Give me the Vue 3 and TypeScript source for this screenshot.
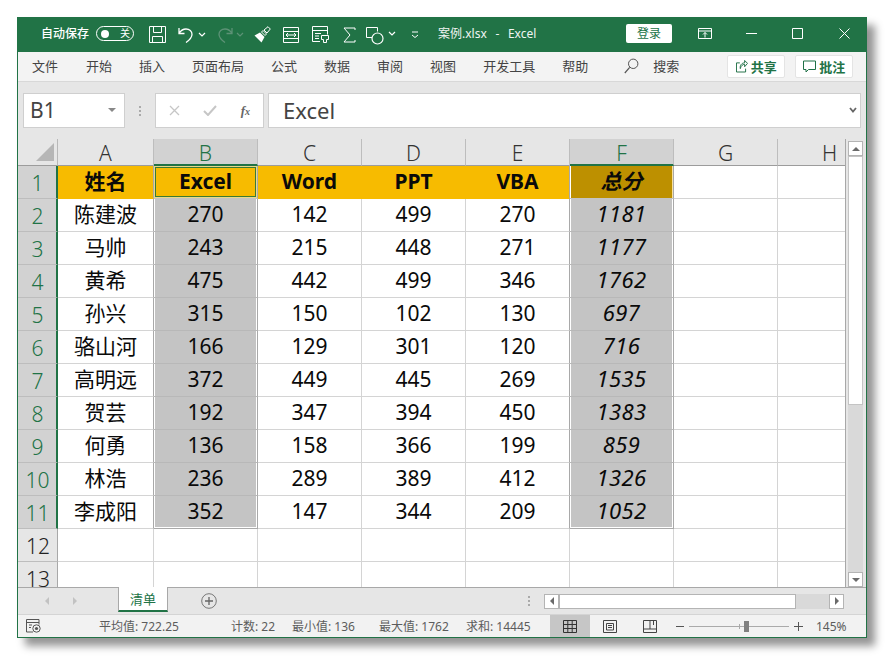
<script setup lang="ts">
const menus = ['文件', '开始', '插入', '页面布局', '公式', '数据', '审阅', '视图', '开发工具', '帮助']
const cols = ['A', 'B', 'C', 'D', 'E', 'F', 'G', 'H']
const rows: (string | number)[][] = [
  ['姓名', 'Excel', 'Word', 'PPT', 'VBA', '总分'],
  ['陈建波', 270, 142, 499, 270, 1181],
  ['马帅', 243, 215, 448, 271, 1177],
  ['黄希', 475, 442, 499, 346, 1762],
  ['孙兴', 315, 150, 102, 130, 697],
  ['骆山河', 166, 129, 301, 120, 716],
  ['高明远', 372, 449, 445, 269, 1535],
  ['贺芸', 192, 347, 394, 450, 1383],
  ['何勇', 136, 158, 366, 199, 859],
  ['林浩', 236, 289, 389, 412, 1326],
  ['李成阳', 352, 147, 344, 209, 1052],
  ['', '', '', '', '', ''],
  ['', '', '', '', '', '']
]
function cellClass(r: number, c: number): Record<string, boolean> {
  const inData = r <= 10
  return {
    head: r === 0,
    sel: inData && (c === 1 || c === 5),
    beforeSel: inData && (c === 0 || c === 4),
    active: r === 0 && c === 1,
    total: inData && c === 5,
    totalNum: inData && r > 0 && c === 5,
    headTotal: r === 0 && c === 5,
    lastSel: r === 10 && (c === 1 || c === 5)
  }
}
</script>

<template>
  <div class="page">
    <div class="window">
      <header class="titlebar">
        <span class="autosave">自动保存</span>
        <span class="toggle"><i class="knob"></i><b>关</b></span>
        <svg class="ic save" width="17" height="17" viewBox="0 0 17 17"><path d="M.5.5h16v16H.5zM4.5.5v6h8v-6M3.500 16.500v-6h10v6" fill="none" stroke="#fff"/></svg>
        <svg class="ic undo" width="16" height="16" viewBox="0 0 16 16"><path d="M1 1v5.500h5.500M1.300 6C3 3.300 5.300 2 8 2c3.500 0 6 2.400 6 5.300 0 3-2.300 5.700-6 8.200" fill="none" stroke="#fff" stroke-width="1.300"/></svg>
        <svg class="ic chev" width="8" height="5" viewBox="0 0 8 5"><path d="M1 1l3 3 3-3" fill="none" stroke="#fff" stroke-width="1.200"/></svg>
        <svg class="ic redo" width="16" height="16" viewBox="0 0 16 16"><path d="M15 1v5.500H9.500M14.700 6C13 3.300 10.700 2 8 2 4.500 2 2 4.400 2 7.300c0 3 2.300 5.700 6 8.200" fill="none" stroke="#5d9276" stroke-width="1.300"/></svg>
        <svg class="ic chev2" width="8" height="5" viewBox="0 0 8 5"><path d="M1 1l3 3 3-3" fill="none" stroke="#5d9276" stroke-width="1.200"/></svg>
        <svg class="ic brush" width="17" height="17" viewBox="0 0 17 17"><path d="M.5 9.500L6 6.500l4.500 4.500L7.500 16.500z" fill="#fff"/><path d="M7.500 6l1.500-1.500 3.500 3.500L11 9.500z" fill="none" stroke="#fff"/><path d="M10 4l4-3.300 2.300 2.300L13 7z" fill="none" stroke="#fff"/></svg>
        <svg class="ic merge" width="16" height="16" viewBox="0 0 16 16"><path d="M.5.500h15v15H.5zM.5 4.500h15M.5 11.500h15" fill="none" stroke="#fff"/><path d="M3 8h10M5 6L3 8l2 2M11 6l2 2-2 2" fill="none" stroke="#fff"/></svg>
        <svg class="ic form" width="17" height="17" viewBox="0 0 17 17"><path d="M8 15.500H.5V.5h15v8M.5 4.500h15M3 7.500h6M3 10h4M3 12.500h4" fill="none" stroke="#fff"/><path d="M9.500 9.500h7v4h-2v3h-3v-3h-2z" fill="none" stroke="#fff"/></svg>
        <svg class="ic sigma" width="13" height="16" viewBox="0 0 13 16"><path d="M12 3V1H1l6 7-6 7h11v-2" fill="none" stroke="#fff"/></svg>
        <svg class="ic shapes" width="18" height="18" viewBox="0 0 18 18"><path d="M6 10.500H.5V.5h11v4" fill="none" stroke="#fff"/><circle cx="11.500" cy="11.500" r="5.500" fill="none" stroke="#fff" stroke-width="1.200"/></svg>
        <svg class="ic chev3" width="8" height="5" viewBox="0 0 8 5"><path d="M1 1l3 3 3-3" fill="none" stroke="#fff" stroke-width="1.200"/></svg>
        <svg class="ic qat" width="8" height="7" viewBox="0 0 8 7"><path d="M1 1h6M1 4l3 2.500L7 4" fill="none" stroke="#fff"/></svg>
        <span class="doc">案例.xlsx&nbsp; - &nbsp;Excel</span>
        <span class="login">登录</span>
        <svg class="ic ribbon" width="14" height="12" viewBox="0 0 14 12"><path d="M.5.500h13v10H.5zM.5 3h13" fill="none" stroke="#fff"/><path d="M7 9.500V4.500M5 6.500l2-2 2 2" fill="none" stroke="#fff"/></svg>
        <svg class="ic min" width="11" height="1" viewBox="0 0 11 1"><path d="M0 .5h11" stroke="#fff"/></svg>
        <svg class="ic max" width="11" height="11" viewBox="0 0 11 11"><path d="M.5.500h10v10H.5z" fill="none" stroke="#fff"/></svg>
        <svg class="ic close" width="11" height="11" viewBox="0 0 11 11"><path d="M.5.500l10 10M10.500.5l-10 10" fill="none" stroke="#fff"/></svg>
      </header>

      <nav class="menubar">
        <span v-for="m in menus" :key="m" class="menu">{{ m }}</span>
        <svg class="search" width="15" height="16" viewBox="0 0 15 16"><circle cx="9.200" cy="5.800" r="4.700" fill="none" stroke="#555"/><path d="M5.700 9.300L.8 15" stroke="#555" stroke-width="1.200"/></svg>
        <span class="menu searchText">搜索</span>
        <button class="action share"><svg width="12" height="13" viewBox="0 0 12 13"><path d="M4 3H.5v9.500h9.500V9M4.500 9C5 6 7 4.500 9 4.500V7l3-3.500L9 .5v2.500C6 3 3.800 5.500 4.500 9z" fill="none" stroke="#1f7046" transform="scale(.96)"/></svg>共享</button>
        <button class="action note"><svg width="13" height="13" viewBox="0 0 13 13"><path d="M.5 1h12v8.500H5.500L3 12V9.500H.5z" fill="none" stroke="#1f7046"/></svg>批注</button>
      </nav>

      <section class="formula">
        <div class="namebox"><span>B1</span><i class="tri"></i></div>
        <span class="dots"></span>
        <div class="fxbox">
          <svg width="11" height="11" viewBox="0 0 11 11"><path d="M1 1l9 9M10 1l-9 9" stroke="#c6c6c6" stroke-width="1.300"/></svg>
          <svg width="14" height="11" viewBox="0 0 14 11"><path d="M1 6l4 4 8-9" fill="none" stroke="#c6c6c6" stroke-width="2"/></svg>
          <span class="fx">f<small>x</small></span>
        </div>
        <div class="input"><span>Excel</span><svg width="8" height="6" viewBox="0 0 8 6"><path d="M1 1l3 3.500L7 1" fill="none" stroke="#666" stroke-width="1.800"/></svg></div>
      </section>

      <section class="body">
        <div class="sheetarea">
          <div class="grid">
            <div class="corner"><i></i></div>
            <div v-for="(c, i) in cols" :key="c" class="colhead" :class="{ colsel: i === 1 || i === 5 }">{{ c }}</div>
            <template v-for="(row, r) in rows" :key="r">
              <div class="rowhead" :class="{ rowsel: r <= 10 }">{{ r + 1 }}</div>
              <div v-for="(v, c) in row" :key="c" class="cell" :class="cellClass(r, c)">{{ v }}</div>
              <div class="cell"></div>
              <div class="cell"></div>
            </template>
          </div>
        </div>
        <div class="vscroll">
          <span class="vbtn"><i class="up"></i></span>
          <span class="vthumb"></span>
          <span class="vtrack"></span>
          <span class="vbtn"><i class="down"></i></span>
        </div>
      </section>

      <section class="tabbar">
        <i class="nav left"></i>
        <i class="nav right"></i>
        <span class="tab">清单</span>
        <svg class="plus" width="16" height="16" viewBox="0 0 16 16"><circle cx="8" cy="8" r="7.300" fill="none" stroke="#777"/><path d="M4 8h8M8 4v8" stroke="#666" stroke-width="1.300"/></svg>
        <span class="dots tabdots"></span>
        <div class="hscroll">
          <span class="hbtn"><i class="left2"></i></span>
          <span class="hthumb"></span>
          <span class="htrack"></span>
          <span class="hbtn"><i class="right2"></i></span>
        </div>
      </section>

      <footer class="status">
        <svg class="macro" width="15" height="14" viewBox="0 0 15 14"><path d="M7 13H.5V.5h12.500v5M.5 3.500h12.500M3 6h3M3 8.500h2" fill="none" stroke="#555"/><circle cx="10.500" cy="9.500" r="3.700" fill="none" stroke="#555"/><circle cx="10.500" cy="9.500" r="1.600" fill="#555"/></svg>
        <span class="st st1">平均值: 722.25</span>
        <span class="st st2">计数: 22</span>
        <span class="st st3">最小值: 136</span>
        <span class="st st4">最大值: 1762</span>
        <span class="st st5">求和: 14445</span>
        <span class="view on"><svg width="14" height="13" viewBox="0 0 14 13"><path d="M.5.500h13v12H.5zM.5 4.500h13M.5 8.500h13M4.800.5v12M9.200.5v12" fill="none" stroke="#333"/></svg></span>
        <span class="view"><svg width="14" height="13" viewBox="0 0 14 13"><path d="M.5.500h13v12H.5zM3.500 3.500h7v6.500h-7zM5 5.500h4M5 7.500h4" fill="none" stroke="#444"/></svg></span>
        <span class="view"><svg width="14" height="13" viewBox="0 0 14 13"><path d="M.5.500h13v12H.5zM.5 9h13M7 .5V9M10.500.5V5" fill="none" stroke="#444"/></svg></span>
        <span class="zoomMinus"></span>
        <span class="slider"><i class="tick"></i><i class="sthumb"></i></span>
        <span class="zoomPlus"></span>
        <span class="pct">145%</span>
      </footer>
    </div>
  </div>
</template>

<style scoped>
* { box-sizing: border-box; }
.page {
  width: 885px; height: 656px; padding: 17px 0 0 17px; background: #fff;
  font-family: "Noto Sans", "Noto Sans CJK SC", sans-serif; overflow: hidden;
}
.window {
  width: 850px; height: 621px; display: flex; flex-direction: column;
  background: #e6e6e6; border: solid #217346; border-width: 0 1px 1px 1px;
  box-shadow: 8px 8px 8px rgba(0, 0, 0, .42);
}
.titlebar {
  height: 35px; flex: none; background: #217346; color: #fff; display: flex; align-items: center;
  font-size: 12px; padding-left: 23px;
}
.ic { display: block; flex: none; }
.autosave { width: 48px; font-weight: 500; white-space: nowrap; margin-top: -3px; }
.toggle {
  width: 38px; height: 15px; margin-left: 7px; border: 1px solid #fff; border-radius: 8px;
  display: flex; align-items: center; justify-content: space-between; padding: 0 3px 0 4px; flex: none; margin-top: -2px;
}
.knob { width: 8px; height: 8px; border-radius: 50%; background: #fff; }
.toggle b { font-weight: 400; font-size: 10px; line-height: 13px; }
.save { margin-left: 15px; }
.undo { margin-left: 12px; }
.chev { margin-left: 4px; }
.redo { margin-left: 11px; }
.chev2 { margin-left: 3px; }
.brush { margin-left: 10px; }
.merge { margin-left: 12px; }
.form { margin-left: 13px; }
.sigma { margin-left: 14px; }
.shapes { margin-left: 10px; margin-top: 3px; }
.chev3 { margin-left: 4px; margin-top: -3px; }
.qat { margin-left: 15px; }
.doc { margin-left: 19px; width: 188px; white-space: nowrap; color: #f0f5f2; margin-top: -3px; word-spacing: 1.2px; }
.login {
  width: 46px; height: 19px; background: #fff; color: #217346; border-radius: 2px;
  text-align: center; line-height: 19px; flex: none; margin-top: -3px;
}
.ribbon { margin-left: 26px; margin-top: -2px; }
.min { margin-left: 34px; margin-top: -2px; }
.max { margin-left: 35px; margin-top: -2px; }
.close { margin-left: 36px; margin-top: -2px; }

.menubar {
  height: 30px; flex: none; background: #f3f3f3; border-bottom: 1px solid #d8d8d8; display: flex; align-items: center;
  padding: 0 0 2px 14px; color: #444; font-size: 13px;
}
.menu { margin-right: 27px; white-space: nowrap; line-height: 18px; }
.menu:first-child { margin-right: 28px; }
.search { margin-left: 9px; flex: none; }
.searchText { margin-left: 14px; margin-right: 48px; }
.action {
  width: 58px; height: 23px; background: #fff; border: 1px solid #e4e4e4; border-radius: 2px; margin-top: 2px;
  color: #217346; font: 700 13px "Noto Sans", "Noto Sans CJK SC", sans-serif; padding: 0;
  display: flex; align-items: center; justify-content: center; gap: 3px; flex: none;
}
.note { margin-left: 10px; }

.formula {
  height: 57px; flex: none; display: flex; align-items: center; padding: 0 5px 0 5px; background: #e6e6e6;
}
.namebox, .fxbox, .input { height: 35px; background: #fff; border: 1px solid #cfcfcf; display: flex; align-items: center; }
.namebox {
  width: 102px; padding: 0 8px 2px 6px; justify-content: space-between; font-size: 21px; color: #444;
}
.tri { width: 0; height: 0; border: solid transparent; border-width: 4px 4px 0; border-top-color: #888; }
.dots {
  width: 2px; height: 10px; margin-left: 14px; flex: none;
  background: repeating-linear-gradient(#aaa 0 2px, transparent 2px 4px);
}
.fxbox {
  width: 109px; margin-left: 14px; padding: 0 13px 0 13px; justify-content: space-between;
}
.fx { font: italic 700 13px "Liberation Serif", serif; color: #666; }
.fx small { font-size: 10px; }
.input {
  width: 593px; margin-left: 4px; padding: 0 3px 2px 14px; justify-content: space-between; font-size: 22px; color: #444;
}

.body { height: 448px; flex: none; display: flex; overflow: hidden; }
.sheetarea { width: 828px; overflow: hidden; flex: none; border-right: 1px solid #a8a8a8; }
.grid {
  display: grid; grid-template-columns: 40px 96px repeat(7, 104px); grid-template-rows: 27px repeat(13, 33px);
  font-size: 21px; color: #111;
}
.corner { background: #e6e6e6; border-right: 1px solid #b8b8b8; border-bottom: 1px solid #9c9c9c; }
.corner i {
  display: block; margin: 4px 0 0 18px; width: 18px; height: 18px; background: #b6b6b6;
  clip-path: polygon(100% 0, 100% 100%, 0 100%);
}
.colhead {
  background: #e6e6e6; border-right: 1px solid #bdbdbd; border-bottom: 1px solid #9c9c9c; padding-top: 2px;
  display: flex; justify-content: center; align-items: center; font-size: 21px; color: #333; line-height: 24px; font-weight: 300;
}
.colsel { background: #d2d2d2; color: #217346; border-bottom: 2px solid #217346; }
.rowhead {
  background: #e6e6e6; border-right: 1px solid #a8a8a8; border-bottom: 1px solid #bdbdbd; padding: 2px 0 0 1px;
  display: flex; justify-content: center; align-items: center; font-size: 21px; color: #222; font-weight: 300;
}
.rowsel { background: #d2d2d2; color: #217346; border-right: 2px solid #217346; }
.cell {
  background: #fff; border-right: 1px solid #d4d4d4; border-bottom: 1px solid #d4d4d4; padding-bottom: 2px;
  display: flex; justify-content: center; align-items: center; line-height: 1; white-space: nowrap; color: #0a0a0a;
}
.beforeSel { border-right-color: #a9a9a9; }
.head { background: #f7bb00; font-weight: 700; border-bottom-color: #f7bb00; }
.head:not(.beforeSel) { border-right-color: #f7bb00; }
.sel { background: #c4c4c4; border-right-color: #a9a9a9; border-bottom-color: #b8b8b8; box-shadow: inset 1px 0 #fff, inset -1px 0 #fff; }
.head.sel { background: #f7bb00; border-bottom-color: #c4c4c4; border-right-color: #a9a9a9; }
.active { box-shadow: inset 0 0 0 1px #e8d98a, inset 0 0 0 2px #3b7a34; }
.total { font-style: italic; }
.totalNum { font-size: 22px; letter-spacing: .4px; padding-bottom: 4px; }
.headTotal { background: #bd9000 !important; box-shadow: inset 1px 0 #fff, inset -1px 0 #f7e0a0; }
.lastSel { box-shadow: inset 1px 0 #fff, inset -1px 0 #fff, inset 0 -1px #fff; border-bottom-color: #a9a9a9; }

.vscroll { width: 20px; flex: none; display: flex; flex-direction: column; padding: 2px 3px 0 2px; }
.vbtn { width: 15px; height: 15px; background: #fff; border: 1px solid #b4b4b4; display: flex; align-items: center; justify-content: center; flex: none; }
.vthumb { width: 15px; height: 249px; background: #fff; border: 1px solid #c4c4c4; flex: none; }
.vtrack { flex: 1; background: #d9d9d9; }
.up, .down { width: 0; height: 0; border: solid transparent; border-width: 0 4px 4px; border-bottom-color: #6a6a6a; }
.down { border-width: 4px 4px 0; border-top-color: #6a6a6a; border-bottom-color: transparent; }

.tabbar {
  height: 28px; flex: none; background: #e6e6e6; border-top: 1px solid #a8a8a8; border-bottom: 1px solid #d4d4d4;
  display: flex; align-items: center;
}
.nav { width: 0; height: 0; border: solid transparent; flex: none; }
.left { border-width: 4px 4px 4px 0; border-right-color: #c2c2c2; margin-left: 27px; }
.right { border-width: 4px 0 4px 4px; border-left-color: #c2c2c2; margin-left: 24px; }
.tab {
  width: 50px; height: 25px; margin-left: 41px; margin-top: -1px; background: #fff; color: #217346; font-size: 13px; text-align: center; line-height: 24px;
  border: solid #a8a8a8; border-width: 0 1px; border-bottom: 2px solid #217346; align-self: flex-start; flex: none;
}
.plus { margin-left: 33px; flex: none; }
.tabdots { margin-left: 311px; height: 10px; }
.hscroll { margin-left: 14px; width: 300px; height: 15px; display: flex; flex: none; background: #d9d9d9; }
.hbtn { width: 15px; height: 15px; background: #fff; border: 1px solid #b4b4b4; display: flex; align-items: center; justify-content: center; flex: none; }
.hthumb { width: 237px; background: #fff; border: 1px solid #b4b4b4; flex: none; }
.htrack { flex: 1; }
.left2, .right2 { width: 0; height: 0; border: solid transparent; }
.left2 { border-width: 4px 4px 4px 0; border-right-color: #6a6a6a; }
.right2 { border-width: 4px 0 4px 4px; border-left-color: #6a6a6a; }

.status {
  flex: 1; background: #f2f2f2; display: flex; align-items: center; font-size: 12px; color: #5c5c5c; min-height: 0;
}
.macro { margin-left: 8px; flex: none; }
.st { white-space: nowrap; }
.st1 { width: 132px; margin-left: 58px; }
.st2 { width: 61px; }
.st3 { width: 87px; }
.st4 { width: 87px; }
.st5 { width: 84px; }
.view { width: 40px; height: 100%; display: flex; align-items: center; justify-content: center; flex: none; }
.view.on { background: #c6c6c6; }
.zoomMinus { width: 8px; height: 1px; background: #555; margin-left: 6px; flex: none; }
.slider { width: 100px; height: 1px; background: #aaa; margin-left: 5px; position: relative; flex: none; }
.tick { position: absolute; left: 50px; top: -2px; width: 1px; height: 5px; background: #aaa; }
.sthumb { position: absolute; left: 55px; top: -5px; width: 5px; height: 11px; background: #808080; }
.zoomPlus {
  width: 9px; height: 9px; margin-left: 5px; flex: none;
  background: linear-gradient(#555, #555) center/9px 1px no-repeat, linear-gradient(#555, #555) center/1px 9px no-repeat;
}
.pct { margin-left: 13px; white-space: nowrap; }
</style>
